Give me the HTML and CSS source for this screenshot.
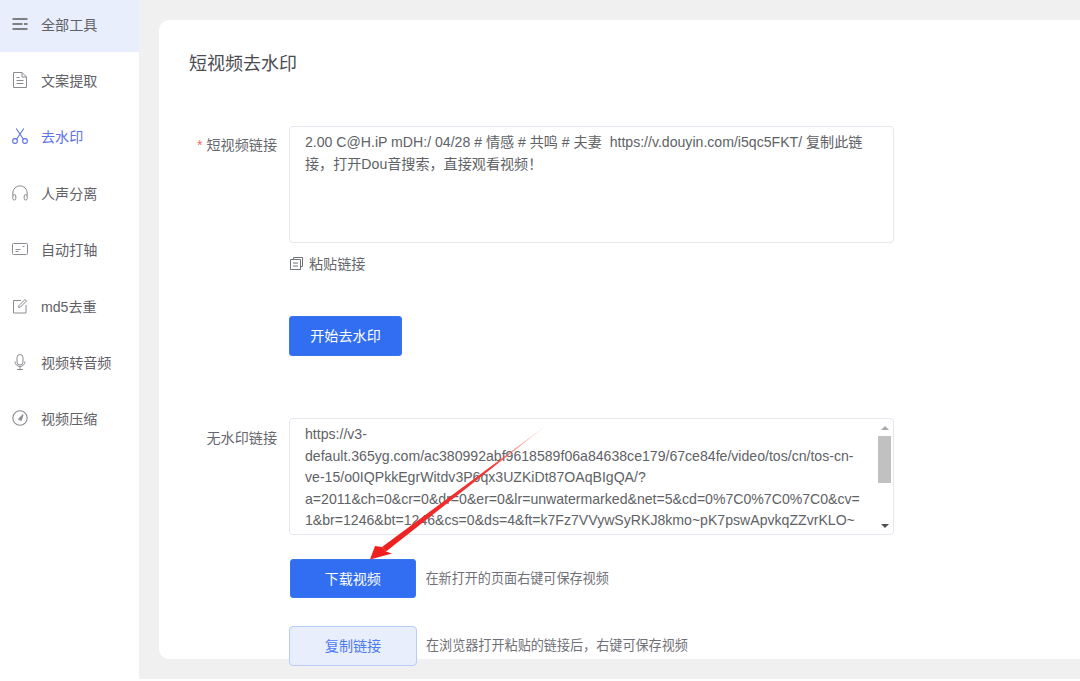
FILE: index.html
```html
<!DOCTYPE html>
<html lang="zh-CN">
<head>
<meta charset="utf-8">
<title>短视频去水印</title>
<link rel="stylesheet" href="styles.css">
</head>
<body>
<div class="app">
  <nav class="sidebar">
    <a class="nav-item active">
      <svg class="nav-icon" viewBox="0 0 16 16"><path d="M.5 2h15v2H.5zM.5 7h10v2H.5zM12 7h3.500v2H12zM.5 12h15v2H.5z" fill="#7d7f85"/></svg>
      <span>全部工具</span>
    </a>
    <a class="nav-item">
      <svg class="nav-icon" viewBox="0 0 16 16" fill="none" stroke="#8a8c92" stroke-width="1"><path d="M1.500.5h8.500l4.500 4.500v10.500h-13zM10 .5v4.500h4.500M4.500 8.500h7M4.500 11.500h7M4.500 5.500h3"/></svg>
      <span>文案提取</span>
    </a>
    <a class="nav-item current">
      <svg class="nav-icon" viewBox="0 0 16 16" fill="none" stroke="#5b72e8" stroke-width="1.100"><circle cx="3" cy="13" r="2.400"/><circle cx="13" cy="13" r="2.400"/><path d="M4.500 11.200 11.800 .5M11.500 11.200 4.200 .5"/></svg>
      <span>去水印</span>
    </a>
    <a class="nav-item">
      <svg class="nav-icon" viewBox="0 0 16 16" fill="none" stroke="#8a8c92" stroke-width="1"><path d="M.8 10.500V8a7.200 7.200 0 0 1 14.400 0v2.500"/><rect x=".8" y="9.500" width="3" height="5.500" rx="1.500"/><rect x="12.200" y="9.500" width="3" height="5.500" rx="1.500"/></svg>
      <span>人声分离</span>
    </a>
    <a class="nav-item">
      <svg class="nav-icon" viewBox="0 0 16 16" fill="none" stroke="#8a8c92" stroke-width="1"><rect x=".5" y="2.500" width="15" height="11" rx="1"/><path d="M3.500 8.500h5M3.500 10.500h3M10.500 5.500h2"/></svg>
      <span>自动打轴</span>
    </a>
    <a class="nav-item">
      <svg class="nav-icon" viewBox="0 0 16 16" fill="none" stroke="#8a8c92" stroke-width="1"><path d="M9 2.500H1.500v12.500h12.500V7M6.500 9.500l.5-2L13 1.500l1.500 1.500-6 6z"/></svg>
      <span>md5去重</span>
    </a>
    <a class="nav-item">
      <svg class="nav-icon" viewBox="0 0 16 16" fill="none" stroke="#8a8c92" stroke-width="1"><rect x="5" y=".5" width="6" height="10.500" rx="3"/><path d="M3 7.500a5 5 0 0 0 10 0M8 12.500V15M5 15.500h6"/></svg>
      <span>视频转音频</span>
    </a>
    <a class="nav-item">
      <svg class="nav-icon" viewBox="0 0 16 16" fill="none" stroke="#8a8c92" stroke-width="1.100"><circle cx="8" cy="8" r="7.200"/><path d="M6.800 9.200 11 4.500 9.200 10.300z" fill="#8a8c92"/></svg>
      <span>视频压缩</span>
    </a>
  </nav>
  <main class="content">
    <section class="card">
      <h1 class="title">短视频去水印</h1>
      <div class="form-row first-row">
        <label class="label"><i class="req">*</i>短视频链接</label>
        <div class="field">
          <div class="box input-box">2.00 C@H.iP mDH:/ 04/28 # 情感 # 共鸣 # 夫妻&nbsp; https://v.douyin.com/i5qc5FKT/ 复制此链接，打开Dou音搜索，直接观看视频！</div>
          <div class="paste">
            <svg class="paste-icon" viewBox="0 0 13 13" fill="none" stroke="#70737a" stroke-width="1"><path d="M3.500 2.500V.5h9v9h-2M.5 2.500h10v10H.5zM3 6h5M3 9h5"/></svg>
            <span>粘贴链接</span>
          </div>
          <button class="btn primary start">开始去水印</button>
        </div>
      </div>
      <div class="form-row result-row">
        <label class="label result-label">无水印链接</label>
        <div class="field">
          <div class="box output-box">
            <div class="output-text">https://v3-default.365yg.com/ac380992abf9618589f06a84638ce179/67ce84fe/video/tos/cn/tos-cn-ve-15/o0IQPkkEgrWitdv3P6qx3UZKiDt87OAqBIgQA/?a=2011&amp;ch=0&amp;cr=0&amp;dr=0&amp;er=0&amp;lr=unwatermarked&amp;net=5&amp;cd=0%7C0%7C0%7C0&amp;cv=1&amp;br=1246&amp;bt=1246&amp;cs=0&amp;ds=4&amp;ft=k7Fz7VVywSyRKJ8kmo~pK7pswApvkqZZvrKLO~mc1z0z0t4hyqvd6mu66aqEqbn8lu0RtaLLMaMqu2Nk</div>
            <div class="scrollbar" aria-hidden="true">
              <div class="sb-btn"><i class="tri up"></i></div>
              <div class="sb-thumb"></div>
              <div class="sb-track"></div>
              <div class="sb-btn"><i class="tri down"></i></div>
            </div>
          </div>
          <div class="action">
            <button class="btn primary wide">下载视频</button>
            <span class="hint">在新打开的页面右键可保存视频</span>
          </div>
          <div class="action second">
            <button class="btn soft wide">复制链接</button>
            <span class="hint">在浏览器打开粘贴的链接后，右键可保存视频</span>
          </div>
        </div>
      </div>
    </section>
  </main>
</div>
<svg class="arrow" viewBox="0 0 1080 681" aria-hidden="true">
  <defs>
    <linearGradient id="fade" gradientUnits="userSpaceOnUse" x1="548" y1="424" x2="390" y2="548">
      <stop offset="0" stop-color="#f5a0a0" stop-opacity=".3"/>
      <stop offset=".35" stop-color="#f03a3a"/>
      <stop offset="1" stop-color="#ee1f1f"/>
    </linearGradient>
  </defs>
  <path d="M548 424 386 551.500 382 547z" fill="url(#fade)"/>
  <path d="M370 559.500 375 546 382 547 386 551.500 392 553.500z" fill="#ee1f1f"/>
</svg>
</body>
</html>
```
FILE: styles.css
```css
* { box-sizing: border-box; }
html, body { margin: 0; height: 681px; overflow: hidden; background: #fff; }
body { font-family: "Liberation Sans", "Noto Sans CJK SC", sans-serif; font-size: 14.100px; color: #606266; position: relative; }
.app { display: flex; height: 679px; background: #f0f0f0; overflow: hidden; }
.sidebar { width: 139px; flex: none; background: #fff; margin-top: -3px; }
.nav-item { display: flex; align-items: center; height: 56.400px; padding-left: 12px; color: #5f6167; }
.nav-icon { width: 16px; height: 16px; flex: none; margin-right: 13px; }
.active { background: #e8eefc; height: 55px; margin-bottom: -.200px; padding-bottom: 1px; }
.current { color: #5b72e8; }
.content { flex: 1; padding: 20px 0 20px 20px; min-width: 0; }
.card { background: #fff; height: 100%; border-radius: 10px 0 0 10px; padding: 31px 0 0 30px; }
.title { margin: 1px 0 0; font-size: 18px; font-weight: 400; line-height: 24px; color: #4a4c52; }
.form-row { display: flex; }
.first-row { margin-top: 50px; }
.result-row { margin-top: 62px; }
.label { width: 88px; flex: none; text-align: right; line-height: 20px; padding-top: 9px; color: #66686e; }
.result-label { padding-top: 10px; }
.req { font-style: normal; color: #f56c6c; margin-right: 4px; }
.field { margin-left: 12px; width: 605px; flex: none; }
.box { width: 605px; height: 117px; border: 1px solid #e4e7ed; border-radius: 4px; padding: 5px 15px; line-height: 21.500px; color: #606266; background: #fff; }
.output-box { display: flex; padding: 0; overflow: hidden; }
.output-text { flex: 1; min-width: 0; overflow: hidden; padding: 5px 12px 0 15px; overflow-wrap: anywhere; }
.scrollbar { flex: none; width: 15px; margin-right: 1px; display: flex; flex-direction: column; }
.sb-btn { flex: none; height: 17px; display: flex; align-items: center; justify-content: center; }
.sb-thumb { flex: none; height: 47px; margin: 0 1px; background: #c1c1c1; }
.sb-track { flex: 1; }
.tri { width: 0; height: 0; border-left: 4px solid transparent; border-right: 4px solid transparent; }
.up { border-bottom: 4px solid #a8a8a8; }
.down { border-top: 4px solid #505050; }
.paste { display: flex; align-items: center; margin-top: 10px; height: 20px; color: #66686e; padding-left: 1px; }
.paste-icon { width: 13px; height: 13px; margin-right: 6px; }
.btn { font: inherit; border-radius: 3px; cursor: pointer; border: 1px solid transparent; display: block; padding: 0 0 2px; }
.primary { background: #316ef2; border-color: #3a74f0; color: #fff; }
.soft { background: #e8eefc; border-color: #b9ccf7; color: #4f7cf0; }
.start { margin-top: 43px; width: 113px; height: 40px; }
.action { display: flex; align-items: center; margin-top: 24px; }
.second { margin-top: 28px; }
.wide { width: 125.500px; height: 39px; flex: none; margin-left: 1px; }
.second .wide { width: 128px; height: 40px; margin-left: 0; padding-bottom: 3px; border-radius: 4px; }
.hint { margin-left: 10px; font-size: 13.100px; color: #6f7177; padding-bottom: 2px; }
.second .hint { margin-left: 9px; padding-bottom: 3px; }
.arrow { position: absolute; left: 0; top: 0; width: 1080px; height: 681px; pointer-events: none; }
```
